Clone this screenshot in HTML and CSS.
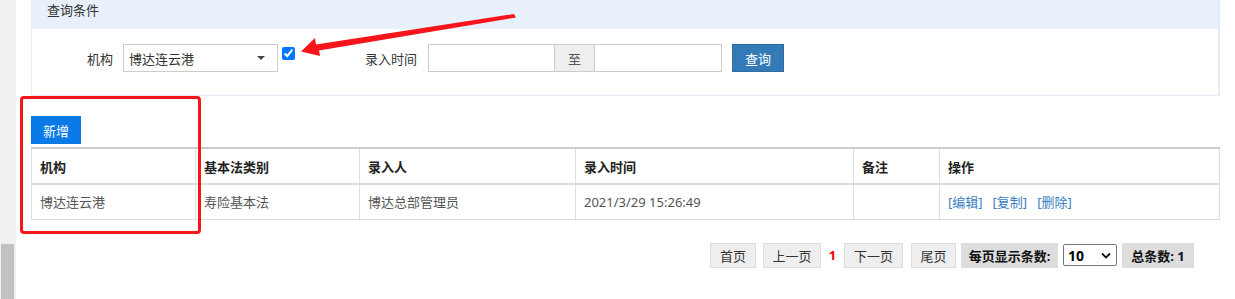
FILE: index.html
```html
<!DOCTYPE html>
<html lang="zh-CN">
<head>
    <meta charset="UTF-8">
    <title>查询</title>
    <link rel="stylesheet" href="styles.css">
</head>
<body>
    <div class="page">
        <div class="side-bar">
            <div class="thumb"></div>
        </div>

        <div class="main">
            <div class="panel">
                <div class="panel-head">查询条件</div>
                <div class="panel-body">
                    <div class="query-row">
                        <span class="q-label org-label">机构</span>
                        <div class="org-select">
                            <span>博达连云港</span>
                            <span class="caret"></span>
                        </div>
                        <input type="checkbox" class="org-check" checked>
                        <span class="q-label time-label">录入时间</span>
                        <div class="date-group">
                            <input type="text" class="date-input">
                            <span class="addon">至</span>
                            <input type="text" class="date-input">
                        </div>
                        <button type="button" class="btn-search">查询</button>
                    </div>
                </div>
            </div>

            <button type="button" class="btn-add">新增</button>

            <table class="grid">
                <tr>
                    <th class="c1">机构</th>
                    <th class="c2">基本法类别</th>
                    <th class="c3">录入人</th>
                    <th class="c4">录入时间</th>
                    <th class="c5">备注</th>
                    <th>操作</th>
                </tr>
                <tr>
                    <td>博达连云港</td>
                    <td>寿险基本法</td>
                    <td>博达总部管理员</td>
                    <td>2021/3/29 15:26:49</td>
                    <td></td>
                    <td class="ops"><a href="#">[编辑]</a><a href="#">[复制]</a><a href="#">[删除]</a></td>
                </tr>
            </table>

            <div class="pager">
                <span class="pg-btn w46">首页</span>
                <span class="pg-btn w58">上一页</span>
                <span class="pg-cur">1</span>
                <span class="pg-btn w59">下一页</span>
                <span class="pg-btn w45">尾页</span>
                <span class="pg-info w97">每页显示条数:</span>
                <div class="pg-size">
                    <span>10</span>
                    <svg width="10" height="7" viewBox="0 0 10 7"><path d="M1 1.5 L5 5.5 L9 1.5" fill="none" stroke="#111" stroke-width="1.8"/></svg>
                </div>
                <span class="pg-info w72">总条数: 1</span>
            </div>
        </div>
    </div>

    <!-- annotations -->
    <div class="mark-box"></div>
    <svg class="mark-arrow" width="1235" height="100" viewBox="0 0 1235 100">
        <polygon points="514,14 516,17.5 319,50.5 320,56 301,51.5 315,38 316,44.5" fill="#f5151a"/>
    </svg>
</body>
</html>
```

FILE: styles.css
```css
* {
    box-sizing: border-box;
}

body {
    margin: 0;
    font-family: "Noto Sans", "Noto Sans CJK SC", sans-serif;
    font-size: 13px;
    color: #333;
    background: #fff;
}

.page {
    display: flex;
    height: 299px;
    overflow: hidden;
}

.side-bar {
    width: 16px;
    background: #f1f1f1;
    display: flex;
    flex-direction: column;
    justify-content: flex-end;
    padding: 0 2px 0 1px;
}

.thumb {
    height: 55px;
    background: #c1c1c1;
}

.main {
    width: 1204px;
    padding-left: 15px;
}

.panel {
    width: 1189px;
    border: 1px solid #e4ecf6;
    border-top: none;
    border-right-width: 2px;
}

.panel-head {
    height: 29px;
    line-height: 20px;
    padding-left: 15px;
    background: #e8f1fb;
    color: #333;
}

.panel-body {
    padding: 15px 0 23px 0;
}

.query-row {
    display: flex;
    align-items: center;
    height: 28px;
}

.q-label {
    text-align: right;
    color: #333;
}

.org-label {
    width: 81px;
    margin-right: 10px;
}

.org-select {
    width: 155px;
    height: 28px;
    border: 1px solid #ccc;
    display: flex;
    align-items: center;
    justify-content: space-between;
    padding: 0 12px 0 5px;
    color: #333;
}

.caret {
    width: 0;
    height: 0;
    border-left: 4px solid transparent;
    border-right: 4px solid transparent;
    border-top: 4px solid #444;
}

.org-check {
    width: 13px;
    height: 13px;
    margin: 0 0 10px 4px;
    accent-color: #0075ff;
}

.time-label {
    width: 122px;
    margin-right: 11px;
}

.date-group {
    display: flex;
    height: 28px;
}

.date-input {
    width: 127px;
    height: 28px;
    border: 1px solid #ccc;
    margin: 0;
    padding: 0 6px;
    outline: none;
}

.date-group .date-input:last-child {
    width: 128px;
}

.addon {
    width: 39px;
    background: #eee;
    border-top: 1px solid #ccc;
    border-bottom: 1px solid #ccc;
    color: #555;
    display: flex;
    align-items: center;
    justify-content: center;
}

.btn-search {
    margin-left: 10px;
    width: 52px;
    height: 28px;
    background: #337ab7;
    border: 1px solid #2e6da4;
    color: #fff;
    font-family: inherit;
    font-size: 13px;
    padding: 0;
}

.btn-add {
    display: block;
    margin-top: 20px;
    width: 50px;
    height: 28px;
    background: #0a7be6;
    border: none;
    color: #fff;
    font-family: inherit;
    font-size: 13px;
    padding: 0;
}

.grid {
    margin-top: 3px;
    width: 1189px;
    border-collapse: collapse;
    table-layout: fixed;
}

.grid th,
.grid td {
    border: 1px solid #ddd;
    text-align: left;
    padding: 0 0 0 8px;
}

.grid th {
    height: 36px;
    font-weight: bold;
    color: #222;
    border-top: 2px solid #ccc;
    border-bottom: 2px solid #ddd;
}

.grid td {
    height: 35px;
    color: #555;
}

.c1, .c2 { width: 164px; }
.c3 { width: 216px; }
.c4 { width: 278px; }
.c5 { width: 86px; }

.ops a {
    color: #3c7ec0;
    text-decoration: none;
    margin-right: 10px;
}

.pager {
    display: flex;
    align-items: center;
    justify-content: flex-end;
    margin-top: 23px;
    padding-right: 26px;
    height: 25px;
}

.pg-btn {
    height: 25px;
    background: #eee;
    border: 1px solid #ddd;
    color: #333;
    display: flex;
    align-items: center;
    justify-content: center;
}

.pg-cur {
    color: #f00;
    font-weight: bold;
    width: 23px;
    text-align: center;
}

.pg-info {
    height: 25px;
    background: #ddd;
    font-weight: bold;
    color: #111;
    display: flex;
    align-items: center;
    justify-content: center;
}

.w46 { width: 46px; margin-right: 7px; }
.w58 { width: 58px; }
.w59 { width: 59px; margin-right: 8px; }
.w45 { width: 45px; margin-right: 5px; }
.w97 { width: 97px; margin-right: 5px; }
.w72 { width: 72px; margin-left: 5px; }

.pg-size {
    width: 54px;
    height: 22px;
    border: 1px solid #767676;
    border-radius: 2px;
    display: flex;
    align-items: center;
    justify-content: space-between;
    padding: 0 5px 0 4px;
    color: #000;
    font-weight: bold;
    font-size: 14px;
}

.mark-box {
    position: absolute;
    left: 20px;
    top: 96px;
    width: 181px;
    height: 138px;
    border: 3px solid #f5151a;
    border-radius: 4px;
}

.mark-arrow {
    position: absolute;
    left: 0;
    top: 0;
}
```
